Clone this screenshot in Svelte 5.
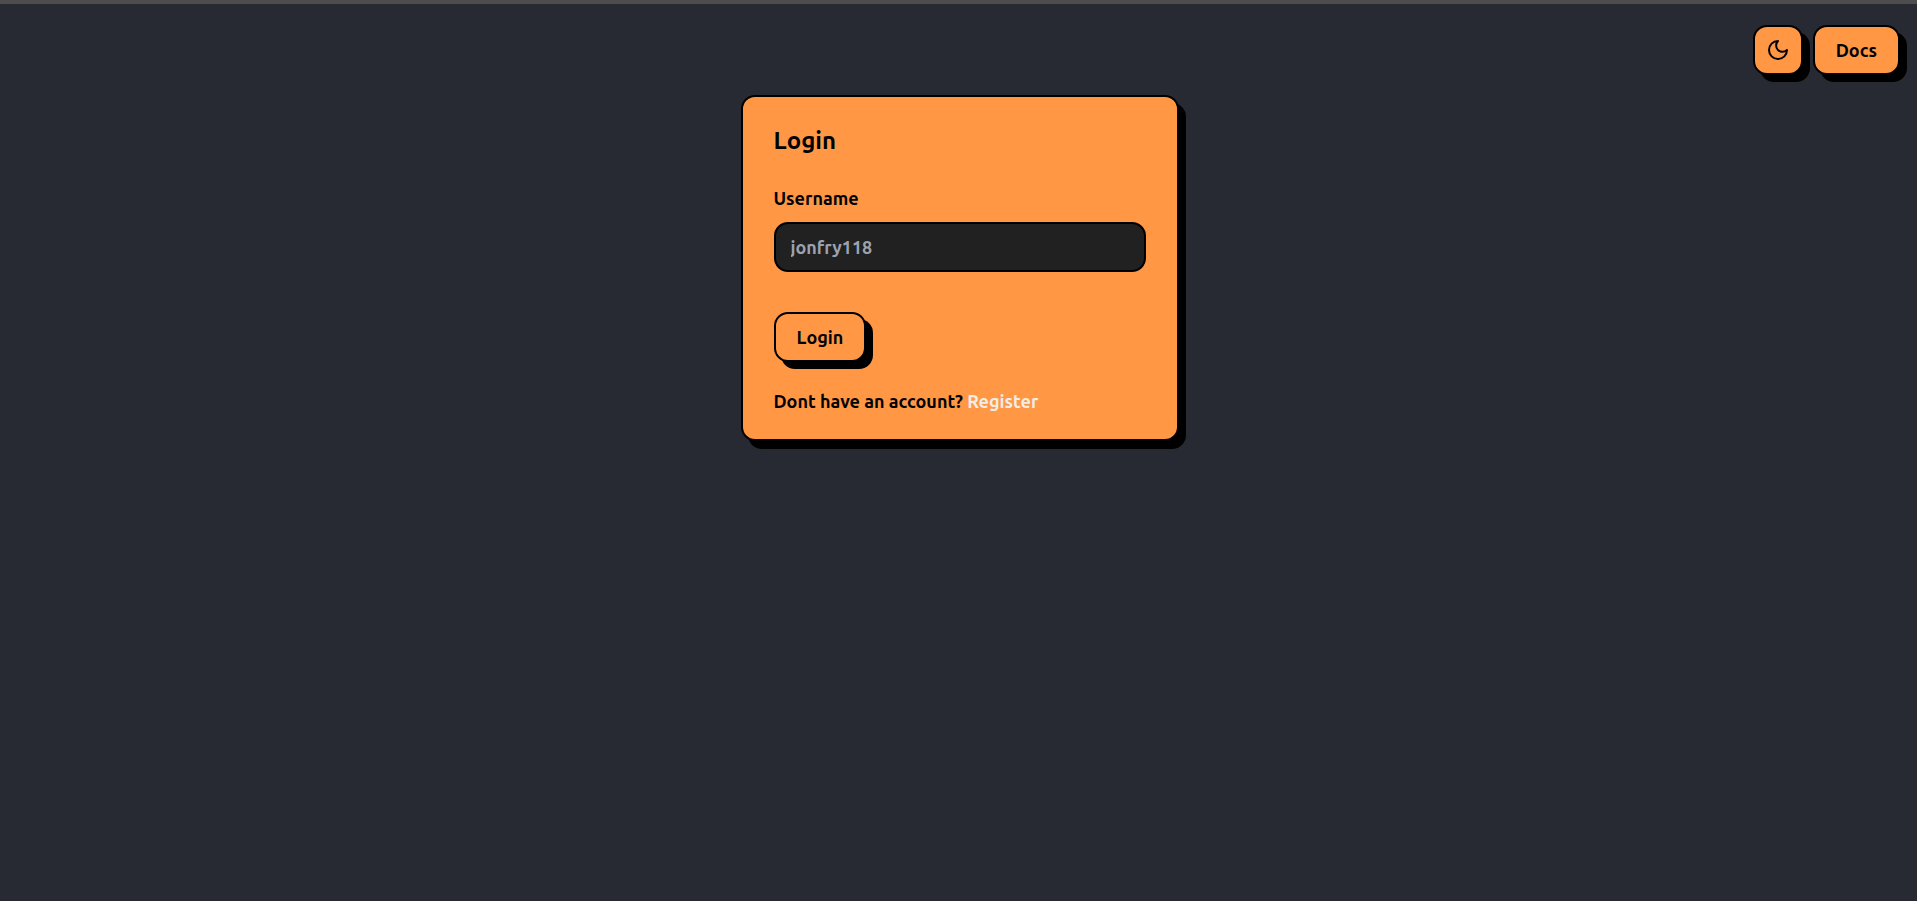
<script>
  let username = $state('');
</script>

<div class="page">
  <header>
    <button class="btn icon" type="button" aria-label="Toggle dark mode">
      <svg viewBox="0 0 24 24" width="24" height="24" fill="none" stroke="currentColor" stroke-width="2" stroke-linecap="round" stroke-linejoin="round" aria-hidden="true">
        <path d="M12 3a6 6 0 0 0 9 9 9 9 0 1 1-9-9Z" />
      </svg>
    </button>
    <a class="btn" href="#docs">Docs</a>
  </header>

  <main>
    <form class="card" onsubmit={(e) => e.preventDefault()}>
      <h1>Login</h1>
      <label for="username">Username</label>
      <input id="username" type="text" placeholder="jonfry118" bind:value={username} />
      <button class="btn" type="submit">Login</button>
      <p>Dont have an account? <a href="#register">Register</a></p>
    </form>
  </main>
</div>

<style>
  :global(body) {
    margin: 0;
    background: #282a33;
  }

  .page {
    box-sizing: border-box;
    min-height: 100vh;
    border-top: 4px solid #4d4d4d;
    color: #000;
    font: 700 18px/26px Ubuntu, "Noto Sans", sans-serif;
  }

  header {
    display: flex;
    justify-content: flex-end;
    gap: 10px;
    padding: 21px 17px 0;
  }

  .btn {
    box-sizing: border-box;
    display: inline-flex;
    align-items: center;
    justify-content: center;
    height: 50px;
    padding: 0 21px;
    border: 2px solid #000;
    border-radius: 14px;
    background: #ff9745;
    box-shadow: 7px 7px 0 #000;
    color: #000;
    font: inherit;
    text-decoration: none;
    cursor: pointer;
  }

  .icon {
    width: 50px;
    padding: 0;
  }

  main {
    display: flex;
    justify-content: center;
    padding: 20px 16px 20px 18px;
  }

  .card {
    box-sizing: border-box;
    display: flex;
    flex-direction: column;
    align-items: flex-start;
    width: 100%;
    max-width: 438px;
    padding: 26px 31px 25px;
    border: 2px solid #000;
    border-radius: 14px;
    background: #ff9745;
    box-shadow: 7px 8px 0 #000;
  }

  h1 {
    margin: 0 0 26px;
    font-size: 24px;
    line-height: 36px;
    font-weight: 700;
  }

  label {
    margin-bottom: 11px;
  }

  input {
    box-sizing: border-box;
    width: 100%;
    height: 50px;
    margin-bottom: 40px;
    padding: 0 15px;
    border: 2px solid #000;
    border-radius: 14px;
    background: #212121;
    color: #fff;
    font: inherit;
  }

  input::placeholder {
    color: #9ca3af;
    opacity: 1;
  }

  p {
    margin: 26px 0 0;
  }

  p a {
    color: #f1ece4;
    text-decoration: none;
  }
</style>
